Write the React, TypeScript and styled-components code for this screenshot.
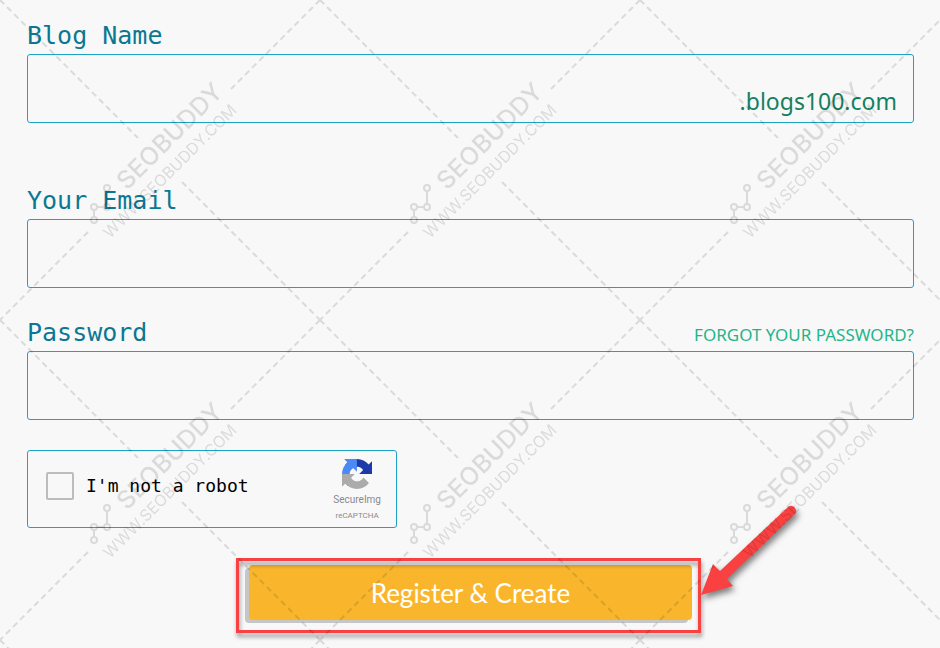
import React from "react";
import styled, { createGlobalStyle } from "styled-components";

const mono = `"DejaVu Sans Mono", "Liberation Mono", monospace`;
const sans = `"Noto Sans", "Open Sans", sans-serif`;
const line = "#1ba3c6";

const GlobalStyle = createGlobalStyle`
  *, *::before, *::after { box-sizing: border-box; }
  body { margin: 0; background: #f8f8f8; }
`;

const Page = styled.main`
  position: relative;
  min-height: 100vh;
  overflow: hidden;
  background: #f8f8f8;
`;

const Form = styled.form`
  display: flex;
  flex-direction: column;
  padding: 18px 26px 15px 27px;
`;

const Field = styled.div<{ $gap: number }>`
  display: flex;
  flex-direction: column;
  margin-bottom: ${(p) => p.$gap}px;
`;

const FieldHead = styled.div`
  display: flex;
  align-items: baseline;
  justify-content: space-between;
  height: 36px;
`;

const Label = styled.label`
  font-family: ${mono};
  font-size: 25px;
  line-height: 36px;
  color: #0b7893;
`;

const ForgotLink = styled.a`
  font-family: ${sans};
  font-size: 17px;
  line-height: 36px;
  color: #1fb58a;
  text-decoration: none;
`;

const InputBox = styled.div`
  display: flex;
  align-items: flex-end;
  height: 69px;
  border: 1px solid ${line};
  border-radius: 3px;
`;

const Input = styled.input`
  flex: 1;
  min-width: 0;
  align-self: stretch;
  padding: 0 16px;
  border: 0;
  outline: 0;
  background: transparent;
  font-family: ${sans};
  font-size: 23px;
  color: #14805f;
`;

const Suffix = styled.span`
  padding: 0 16px 4px 0;
  font-family: ${sans};
  font-size: 23px;
  line-height: 34px;
  color: #14805f;
`;

const Captcha = styled.div`
  display: flex;
  align-items: center;
  justify-content: space-between;
  width: 370px;
  max-width: 100%;
  height: 78px;
  padding: 0 15px 0 18px;
  margin-bottom: 30px;
  border: 1px solid ${line};
  border-radius: 3px;
`;

const CheckLabel = styled.label`
  display: flex;
  align-items: center;
  gap: 12px;
  padding-bottom: 6px;
  font-family: ${mono};
  font-size: 18px;
  line-height: 28px;
  color: #000;
`;

const Checkbox = styled.input`
  appearance: none;
  width: 28px;
  height: 28px;
  margin: 0;
  border: 2px solid #bcbcbc;
  border-radius: 2px;
  background: transparent;
`;

const Brand = styled.div`
  display: flex;
  flex-direction: column;
  align-items: center;
  padding-top: 4px;
  font-family: Roboto, sans-serif;
  color: #8a8a8a;

  svg {
    margin-bottom: 3px;
  }
`;

const BrandText = styled.span<{ $size: number }>`
  font-size: ${(p) => p.$size}px;
  line-height: 16px;
`;

const Actions = styled.div`
  display: flex;
  justify-content: center;
  padding-right: 4px;
`;

const Highlight = styled.div`
  position: relative;
  width: 465px;
  max-width: 100%;
  padding: 7px 9px 13px 13px;

  &::after {
    content: "";
    position: absolute;
    inset: 0;
    border: 3px solid #f94141;
    filter: drop-shadow(1px 4px 2px rgba(0, 0, 0, 0.4));
    pointer-events: none;
  }
`;

const SubmitButton = styled.button`
  display: block;
  width: 100%;
  height: 55px;
  padding: 2px 0 0;
  border: 0;
  border-radius: 4px;
  background: #f9b62d;
  box-shadow: -4px 3px 0 #c6c6c6;
  font-family: Lato, sans-serif;
  font-size: 26px;
  line-height: 53px;
  color: #fff;
`;

const Arrow = styled.svg`
  position: absolute;
  left: 100%;
  bottom: 24px;
  z-index: 1;
  overflow: visible;
  pointer-events: none;
  filter: drop-shadow(2px 4px 3px rgba(0, 0, 0, 0.5));
`;

const Overlay = styled.svg`
  position: absolute;
  inset: 0;
  z-index: 2;
  width: 100%;
  height: 100%;
  pointer-events: none;
`;

function Watermark() {
  return (
    <Overlay aria-hidden="true">
      <defs>
        <pattern id="watermark" width="320" height="320" patternUnits="userSpaceOnUse">
          <g fill="none" stroke="#000" strokeWidth="2">
            <path
              strokeDasharray="6 4"
              d="M0 0L138 138M182 182L320 320M320 0L231 89M88 232L0 320"
            />
            <path d="M94 217V210M97 207H104M107 204V191" />
            <circle cx="94" cy="220" r="3" />
            <circle cx="94" cy="207" r="3" />
            <circle cx="107" cy="207" r="3" />
            <circle cx="107" cy="188" r="3" />
          </g>
          <text
            transform="translate(127 191) rotate(-45)"
            fontFamily="Inter, sans-serif"
            fontSize="25"
            fontWeight="500"
          >
            SEOBUDDY
          </text>
          <text
            transform="translate(110 239) rotate(-45)"
            fontFamily="Inter, sans-serif"
            fontSize="16"
            fontWeight="400"
          >
            WWW.SEOBUDDY.COM
          </text>
        </pattern>
      </defs>
      <rect width="100%" height="100%" fill="url(#watermark)" opacity="0.12" />
    </Overlay>
  );
}

function CaptchaLogo() {
  return (
    <svg width="30" height="30" viewBox="0 0 64 64" aria-hidden="true">
      <path
        fill="#1c3aa9"
        d="M64 31.955l-.033-1.37V4.687l-7.16 7.16C50.948 4.674 42.033.093 32.05.093c-10.4 0-19.622 4.96-25.458 12.64l11.736 11.86a15.55 15.55 0 0 1 4.754-5.334c2.05-1.6 4.952-2.906 8.968-2.906.485 0 .86.057 1.135.163 4.976.393 9.288 3.14 11.828 7.124l-8.307 8.307L64 31.953"
      />
      <path
        fill="#4a8af4"
        d="M31.862.094l-1.37.033H4.594l7.16 7.16C4.58 13.147 0 22.06 0 32.046c0 10.4 4.96 19.622 12.64 25.458L24.5 45.768a15.55 15.55 0 0 1-5.334-4.754c-1.6-2.05-2.906-4.952-2.906-8.968 0-.485.057-.86.163-1.135.393-4.976 3.14-9.288 7.124-11.828l8.307 8.307L31.86.095"
      />
      <path
        fill="#ababab"
        d="M.001 32.045l.033 1.37v25.898l7.16-7.16c5.86 7.173 14.774 11.754 24.76 11.754 10.4 0 19.622-4.96 25.458-12.64l-11.736-11.86a15.55 15.55 0 0 1-4.754 5.334c-2.05 1.6-4.952 2.906-8.968 2.906-.485 0-.86-.057-1.135-.163-4.976-.393-9.288-3.14-11.828-7.124l8.307-8.307L0 32.045"
      />
    </svg>
  );
}

export default function App() {
  return (
    <Page>
      <GlobalStyle />
      <Form onSubmit={(e) => e.preventDefault()}>
        <Field $gap={60}>
          <FieldHead>
            <Label htmlFor="blog">Blog Name</Label>
          </FieldHead>
          <InputBox>
            <Input id="blog" type="text" />
            <Suffix>.blogs100.com</Suffix>
          </InputBox>
        </Field>
        <Field $gap={27}>
          <FieldHead>
            <Label htmlFor="email">Your Email</Label>
          </FieldHead>
          <InputBox>
            <Input id="email" type="email" />
          </InputBox>
        </Field>
        <Field $gap={30}>
          <FieldHead>
            <Label htmlFor="password">Password</Label>
            <ForgotLink href="#forgot">FORGOT YOUR PASSWORD?</ForgotLink>
          </FieldHead>
          <InputBox>
            <Input id="password" type="password" />
          </InputBox>
        </Field>
        <Captcha>
          <CheckLabel>
            <Checkbox type="checkbox" />
            I'm not a robot
          </CheckLabel>
          <Brand>
            <CaptchaLogo />
            <BrandText $size={10}>SecureImg</BrandText>
            <BrandText $size={8}>reCAPTCHA</BrandText>
          </Brand>
        </Captcha>
        <Actions>
          <Highlight>
            <SubmitButton type="submit">Register &amp; Create</SubmitButton>
            <Arrow width="96" height="92" viewBox="0 0 96 92" aria-hidden="true">
              <path
                fill="#f94141"
                d="M0 78L12 47L19 54L87 -10A5 5 0 0 1 94 -3L26 62L32 69Z"
              />
            </Arrow>
          </Highlight>
        </Actions>
      </Form>
      <Watermark />
    </Page>
  );
}
